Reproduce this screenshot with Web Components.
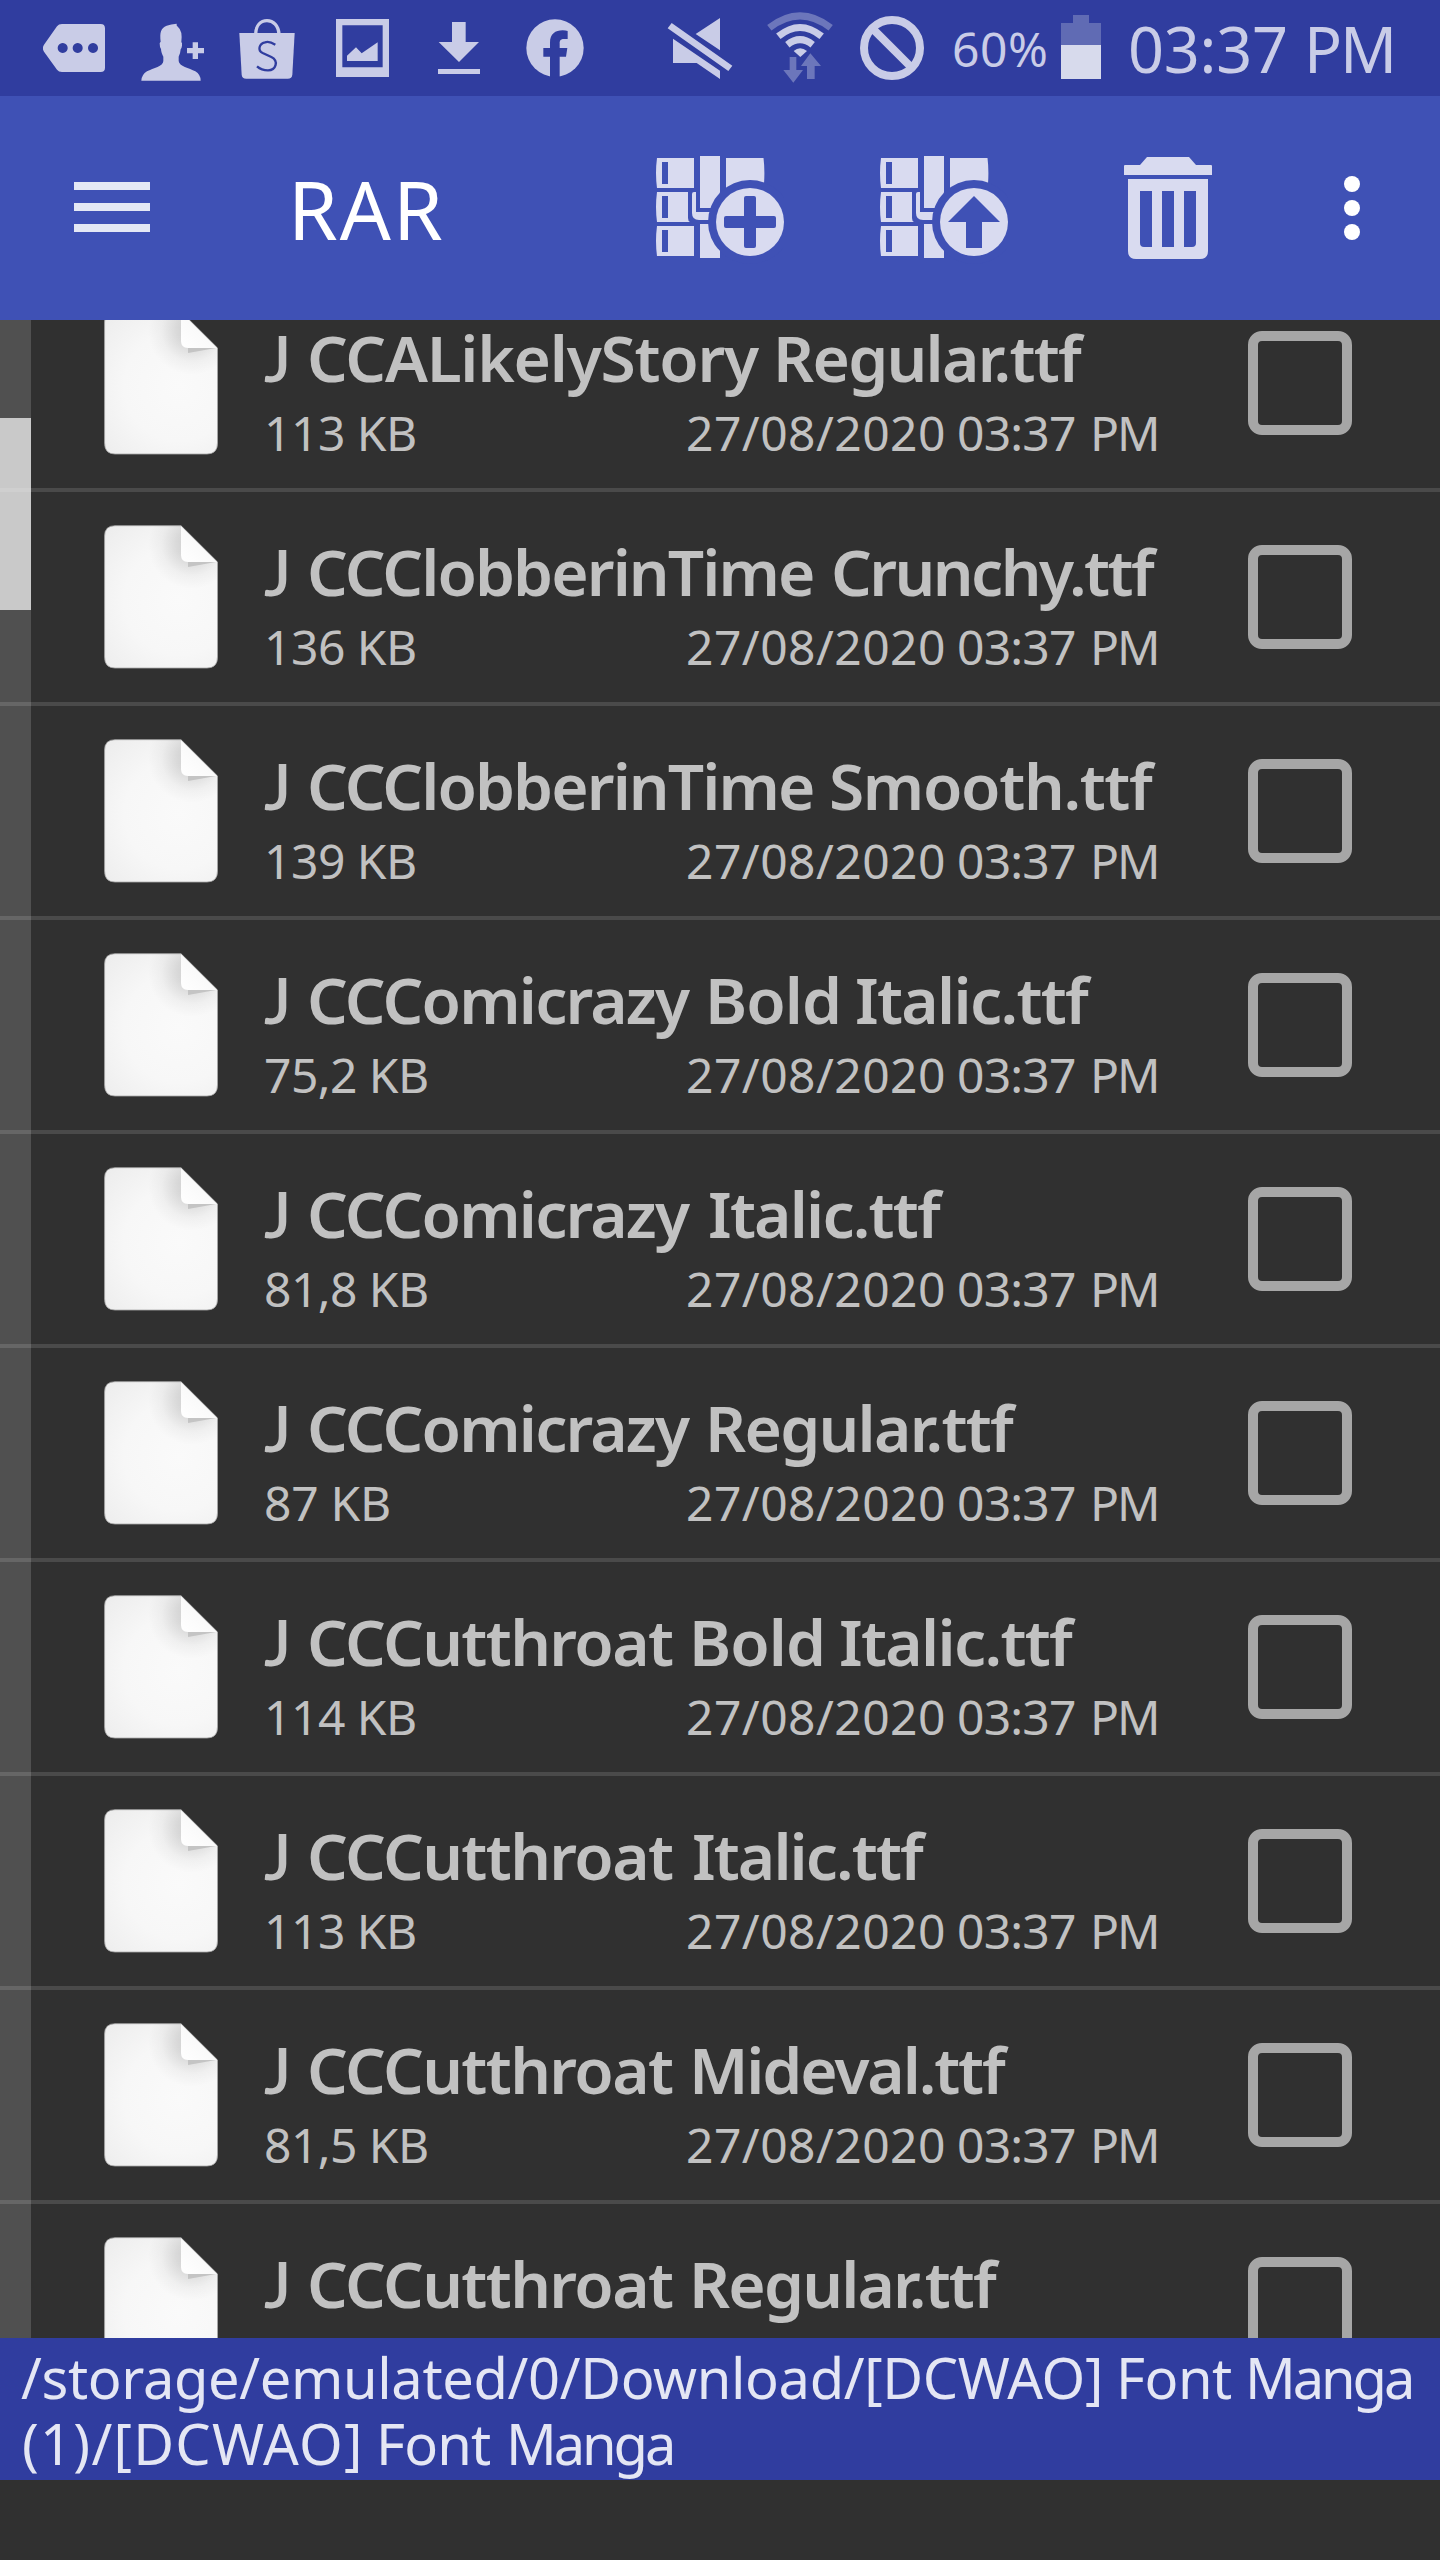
<!DOCTYPE html>
<html lang="en">
<head>
<meta charset="utf-8">
<title>RAR</title>
<style>
  html, body { margin: 0; background: #303030; }
  body { width: 1440px; height: 2560px; overflow: hidden; font-family: "Noto Sans", sans-serif; }
</style>
</head>
<body>
<rar-app></rar-app>
<script>
const define = (name, html, setup) => customElements.define(name, class extends HTMLElement {
  connectedCallback() {
    if (this.shadowRoot) return;
    const t = document.createElement('template');
    t.innerHTML = typeof html === 'function' ? html(this) : html;
    this.attachShadow({ mode: 'open' }).append(t.content.cloneNode(true));
    if (setup) setup(this);
  }
});

/* Single line of text with set word extents. `words` holds "start-end" for
   each word, in pixels from the element's left edge; `width` alone fits the
   whole line as one run. */
const ctx = document.createElement('canvas').getContext('2d');
const runsOf = el => el.hasAttribute('words') ? el.getAttribute('text').split(' ') : [el.getAttribute('text')];
const extentsOf = el => el.hasAttribute('words')
  ? el.getAttribute('words').split(' ').map(s => s.split('-').map(Number))
  : [[0, +el.getAttribute('width')]];
define('fit-text', el => `
  <style>
    :host { display: block; flex: none; width: ${extentsOf(el).pop()[1]}px; }
    .line { display: inline-block; white-space: pre; vertical-align: top; }
    :host([doc]) .line::first-letter { font-family: Lato, sans-serif; }
  </style><span class="line">${runsOf(el).map(w => `<span class="run">${w}</span>`).join(' ')}</span>`,
  el => {
    const origin = el.getBoundingClientRect().left;
    const cs = getComputedStyle(el);
    const extents = extentsOf(el);
    const runs = runsOf(el);
    el.shadowRoot.querySelectorAll('.run').forEach((run, i) => {
      const text = runs[i], [start, end] = extents[i];
      const font = fam => `${cs.fontWeight} ${cs.fontSize} ${fam}`;
      ctx.font = font(i === 0 && el.hasAttribute('doc') ? 'Lato' : cs.fontFamily);
      const left = -ctx.measureText(text[0]).actualBoundingBoxLeft;
      const m = ctx.measureText(text[text.length - 1]);
      const right = m.width - m.actualBoundingBoxRight;
      const box = run.getBoundingClientRect();
      if (text.length > 1) {
        const gap = (end - start - (box.width - left - right)) / (text.length - 1);
        run.style.letterSpacing = gap + 'px';
        run.style.marginRight = -gap + 'px';
      }
      run.style.marginLeft = origin + start - left - box.left + 'px';
    });
  });

const ICONS = {
  more: ['129 0 186 288', 62, 96, '<path fill-rule="evenodd" d="M186 72H302Q315 72 315 85V203Q315 216 302 216H186Q176 216 171 209L132 155Q125 145 132 134L171 79Q176 72 186 72ZM188 129a15 15 0 1 0 .1 0ZM233 129a15 15 0 1 0 .1 0ZM279 129a15 15 0 1 0 .1 0Z"/>'],
  person: ['423 0 189 288', 63, 96, '<path d="M424 242Q425 224 441 214C460 204 490 199 490 183V170C486 163 483 154 483 147Q479 143 479 130Q480 127 482 125C479 96 482 85 500 77Q513 72 530 71Q528 76 534 81Q548 92 544 126Q547 128 546 137Q545 145 542 148Q541 162 536 170V183C537 199 568 204 586 214Q602 224 602 242Z"/><path d="M578 127H594V144H612V160H594V177H578V160H561V144H578Z"/>'],
  bag: ['717 0 168 288', 56, 96, '<path d="M718 99H884L877 224Q876 236 863 236H739Q726 236 725 224Z"/><path d="M767 102C768 76 782 62 801 62S835 76 837 102" fill="none" stroke="currentColor" stroke-width="10"/><path d="M826 134C813 126 801 125 795 127C777 131 772 151 788 159L814 171C837 183 828 211 804 211C790 211 779 206 771 199" fill="none" stroke="#303d9f" stroke-width="7"/>'],
  picture: ['48 0 159 288', 53, 96, '<path fill-rule="evenodd" d="M48 57H207V231H48ZM67 76V202H188V76Z"/><path d="M81 183V167L108 142L125 160L173 127V183Z"/>'],
  download: ['354 0 126 288', 42, 96, '<path d="M396 66H437V126H477L417 186L356 126H396ZM354 207H480V222H354Z"/>'],
  facebook: ['618 0 174 288', 58, 96, '<circle cx="705" cy="144" r="86"/><path fill="#303d9f" d="M690 232V170H670V144H690V128C690 102 706 91 728 91Q737 91 743 93V117H732C722 117 719 122 719 129V144H742L738 170H719V232Z"/>'],
  mute: ['81 0 198 288', 66, 96, '<path d="M240 54V151L167 102ZM99 116L240 212V237L170 189H99ZM95 69L277 197L265 213L83 85Z"/>'],
  wifi: ['381 0 198 288', 66, 96, '<g fill="none" stroke="currentColor" stroke-width="21"><path opacity=".4" d="M388 83Q480 12 572 83"/><path d="M415 109Q480 56 545 109"/><path d="M442 134Q480 104 518 134"/></g><path d="M461 153Q480 136 501 153L481 171Z"/><path opacity=".4" d="M449 171H469V210H489L460 248L430 210H449ZM511 160L543 198H524V237H501V198H483Z"/>'],
  blocked: ['660 0 192 288', 64, 96, '<g fill="none" stroke="currentColor" stroke-width="24"><circle cx="756" cy="144" r="84"/><path d="M703 91L810 198"/></g>'],
  battery: ['183 0 120 288', 40, 96, '<path fill="#606bb4" d="M219 45H267V69H303V135H183V69H219Z"/><path fill="#d7daec" d="M183 135H303V237H183Z"/>'],
  menu: ['74 96 76 224', 76, 224, '<path fill="#e4e8f5" d="M74 182h76v8H74zM74 203h76v8H74zM74 224h76v8H74z"/>'],
  trash: ['1124 96 88 224', 88, 224, '<path d="M1124 175V166Q1124 165 1125 165H1140L1147 157H1189L1196 165H1211Q1212 165 1212 166V175Z"/><path fill-rule="evenodd" d="M1128 179H1208V251Q1208 259 1200 259H1136Q1128 259 1128 251ZM1140 191V243Q1140 247 1144 247H1152V191ZM1162 191V247H1174V191ZM1184 191V247H1192Q1196 247 1196 243V191Z"/>'],
  dots: ['1344 96 16 224', 16, 224, '<g fill="#fff"><circle cx="1352" cy="184" r="8"/><circle cx="1352" cy="208" r="8"/><circle cx="1352" cy="232" r="8"/></g>'],
};
const books = sign => ['656 96 128 224', 128, 224, `
  <path fill-rule="evenodd" d="M657 158H694V188H657Q655 173 657 158ZM662 162V184H668V162ZM657 192H688V218Q688 221 690 222H657Q655 207 657 192ZM662 196V218H668V196ZM657 226H694V256H657Q655 241 657 226ZM662 230V252H668V230Z"/>
  <path d="M700 156H720V208H700ZM726 158H763.500Q765 170 764 184V200H726ZM700 224H720V258H700ZM694 192H696V212H716V220H699Q692 220 692 213V194Q692 192 694 192Z"/>
  <circle cx="750" cy="222" r="42" fill="#3f51b5"/><path d="M700 251.500L718 249L720 251V258H700Z"/>
  <circle cx="750" cy="222" r="34"/><path fill="#3f51b5" d="${sign}"/>`];
ICONS.add = books('M746 196H754Q756 196 756 198V216H774Q776 216 776 218V226Q776 228 774 228H756V246Q756 248 754 248H746Q744 248 744 246V228H726Q724 228 724 226V218Q724 216 726 216H744V198Q744 196 746 196Z');
ICONS.extract = books('M750 196L776 222H758V248H742V222H724Z');

define('app-icon', el => {
  const [box, w, h, body] = ICONS[el.getAttribute('name')];
  return `<style>:host{display:block;flex:none;width:${w}px;height:${h}px}svg{display:block}</style>
    <svg width="${w}" height="${h}" viewBox="${box}" fill="currentColor">${body}</svg>`;
});

define('status-bar', `
  <style>
    :host { display: flex; height: 96px; background: #303d9f; color: #c9cce7; padding-left: 43px; }
    .right { display: flex; margin-left: 83px; }
    .pct { font-size: 48px; line-height: 98px; margin: 0 15px 0 30px; }
    .time { font-size: 63px; line-height: 98px; margin-left: 30px; }
  </style>
  <app-icon name="more"></app-icon>
  <app-icon name="person" style="margin-left:36px"></app-icon>
  <app-icon name="bag" style="margin-left:35px"></app-icon>
  <app-icon name="picture" style="margin-left:41px"></app-icon>
  <app-icon name="download" style="margin-left:49px"></app-icon>
  <app-icon name="facebook" style="margin-left:46px"></app-icon>
  <div class="right">
    <app-icon name="mute"></app-icon>
    <app-icon name="wifi" style="margin-left:34px"></app-icon>
    <app-icon name="blocked" style="margin-left:27px"></app-icon>
    <fit-text class="pct" text="60%" width="92"></fit-text>
    <app-icon name="battery"></app-icon>
    <fit-text class="time" text="03:37 PM" words="0-154 179-261"></fit-text>
  </div>`);

define('tool-bar', `
  <style>
    :host { display: flex; height: 224px; background: #3f51b5; color: #d9dbf0; padding-left: 74px; }
    fit-text { font-size: 80px; line-height: 226px; color: #fff; margin: 0 214px 0 145px; }
  </style>
  <app-icon name="menu"></app-icon>
  <fit-text text="RAR" width="147"></fit-text>
  <app-icon name="add"></app-icon>
  <app-icon name="extract" style="margin-left:96px"></app-icon>
  <app-icon name="trash" style="margin-left:116px"></app-icon>
  <app-icon name="dots" style="margin-left:132px"></app-icon>`);

define('file-icon', `
  <style>:host{display:block;width:114px;height:144px}svg{display:block}</style>
  <svg width="114" height="144" viewBox="0 0 114 144">
    <defs>
      <radialGradient id="p" gradientUnits="userSpaceOnUse" cx="75" cy="75" r="110"><stop offset="0" stop-color="#fafafa"/><stop offset=".5" stop-color="#f7f7f7"/><stop offset="1" stop-color="#ebebeb"/></radialGradient>
      <radialGradient id="s" gradientUnits="userSpaceOnUse" cx="88" cy="20" r="44"><stop offset="0" stop-color="#000" stop-opacity=".18"/><stop offset=".35" stop-color="#000" stop-opacity=".12"/><stop offset=".7" stop-color="#000" stop-opacity=".035"/><stop offset="1" stop-color="#000" stop-opacity="0"/></radialGradient>
      <linearGradient id="f" x1="0" y1="1" x2="1" y2="0"><stop offset="0" stop-color="#fff"/><stop offset="1" stop-color="#f4f4f4"/></linearGradient>
    </defs>
    <path id="page" fill="url(#p)" stroke="#aaa" stroke-width=".8" d="M11 .7H77L113.500 37V132Q113.500 143 103 143H11Q.6 143 .6 132V11Q.6 .7 11 .7Z"/>
    <path fill="url(#s)" d="M11 1H77L113 37V132Q113 142 103 142H11Q1 142 1 132V11Q1 1 11 1Z"/>
    <path fill="#c4c4c4" d="M84 37H112L84 42Z"/>
    <path fill="url(#f)" d="M77 1L113 37H84Q77 37 77 30Z"/>
  </svg>`);

define('check-box', `<style>:host{display:block;box-sizing:border-box;width:104px;height:104px;border:10px solid #a6a6a6;border-radius:14px}</style>`);

define('file-row', el => {
  const a = n => el.getAttribute(n);
  return `
  <style>
    :host { display: flex; flex: none; box-sizing: border-box; height: 214px; align-items: flex-start; border-bottom: 4px solid rgba(255,255,255,.125); color: #c1c1c1; padding-left: 104px; }
    file-icon { margin-top: 33px; }
    .text { width: 894px; margin: 40px 90px 0 46px; }
    .name { font-size: 64px; font-weight: 600; line-height: 80px; }
    .meta { display: flex; justify-content: space-between; font-size: 48px; line-height: 60px; margin-top: 5px; }
    .size { margin-left: ${a('inset')}px; }
    .date { margin-right: 2px; }
    check-box { margin-top: 53px; }
  </style>
  <file-icon></file-icon>
  <div class="text">
    <fit-text doc class="name" text="${a('name')}" words="${a('words')}"></fit-text>
    <div class="meta">
      <fit-text class="size" text="${a('size')}" width="${a('sw')}"></fit-text>
      <fit-text class="date" text="27/08/2020 03:37 PM" words="0-256 271-387 406-468"></fit-text>
    </div>
  </div>
  <check-box></check-box>`;
});

const FILES = [
  ['J CCALikelyStory Regular.ttf', '0-24 46-496 514-821', '113 KB', 4, 147],
  ['J CCClobberinTime Crunchy.ttf', '0-24 46-549 570-894', '136 KB', 4, 147],
  ['J CCClobberinTime Smooth.ttf', '0-24 46-549 568-892', '139 KB', 4, 147],
  ['J CCComicrazy Bold Italic.ttf', '0-24 46-427 446-574 593-828', '75,2 KB', 2, 161],
  ['J CCComicrazy Italic.ttf', '0-24 46-427 446-680', '81,8 KB', 2, 161],
  ['J CCComicrazy Regular.ttf', '0-24 46-427 446-753', '87 KB', 2, 123],
  ['J CCCutthroat Bold Italic.ttf', '0-24 46-409 430-558 577-812', '114 KB', 4, 147],
  ['J CCCutthroat Italic.ttf', '0-24 46-409 430-663', '113 KB', 4, 147],
  ['J CCCutthroat Mideval.ttf', '0-24 46-409 430-745', '81,5 KB', 2, 161],
  ['J CCCutthroat Regular.ttf', '0-24 46-409 430-736', '113 KB', 4, 147],
];

define('file-list', `
  <style>
    :host { display: flow-root; height: 2018px; overflow: hidden; background: linear-gradient(#c9c9c9, #c9c9c9) 0 98px / 31px 192px no-repeat, linear-gradient(#505050, #505050) 0 0 / 31px 100% no-repeat, #303030; }
    .rows { display: flex; flex-direction: column; margin-top: -42px; }
  </style>
  <div class="rows">${FILES.map(([n, w, s, i, sw]) =>
    `<file-row name="${n}" words="${w}" size="${s}" inset="${i}" sw="${sw}"></file-row>`).join('')}</div>`);

define('path-bar', `
  <style>
    :host { display: block; box-sizing: border-box; height: 142px; background: #303d9f; color: #e4e6f4; padding: 6px 0 0 20px; font-size: 56px; line-height: 66px; }
  </style>
  <fit-text text="/storage/emulated/0/Download/[DCWAO] Font Manga" words="1-1079 1101-1211 1230-1391"></fit-text>
  <fit-text text="(1)/[DCWAO] Font Manga" words="4-338 361-470 491-652"></fit-text>`);

define('rar-app', `
  <style>:host { display: flex; flex-direction: column; width: 1440px; height: 2560px; background: #303030; }
  :host > *, status-bar, tool-bar, file-list, path-bar { flex: none; }</style>
  <status-bar></status-bar>
  <tool-bar></tool-bar>
  <file-list></file-list>
  <path-bar></path-bar>`);
</script>
</body>
</html>
